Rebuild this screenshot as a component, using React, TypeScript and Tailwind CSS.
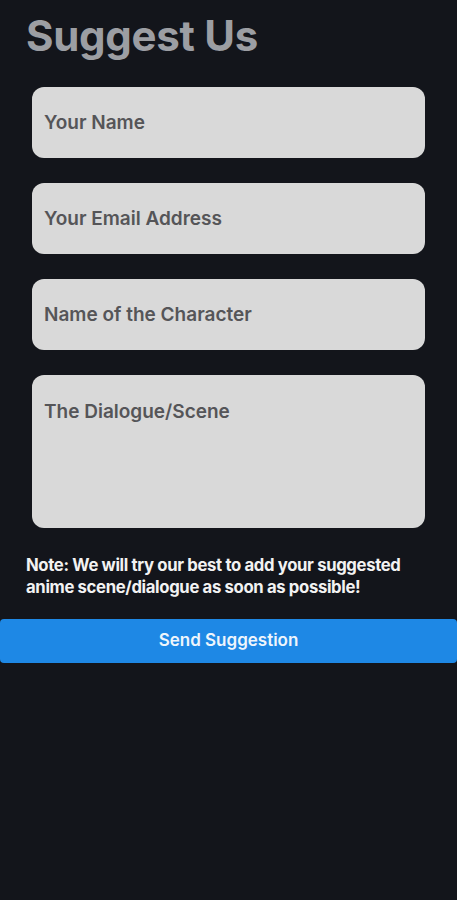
export default function App() {
  const fields = ['Your Name', 'Your Email Address', 'Name of the Character'];

  return (
    <div className="min-h-[900px] w-full bg-[#13151b] font-['Inter',sans-serif]">
      <h1 className="px-[26px] pt-[10px] text-[42px] font-bold leading-[52px] tracking-[-0.3px] text-[#9c9ea3]">
        Suggest Us
      </h1>
      <div className="mt-[25px] flex flex-col gap-[25px] px-[32px]">
        {fields.map((f) => (
          <div
            key={f}
            className="flex h-[71px] items-center rounded-[12px] bg-[#d9d9d9] px-[12px] pt-[2px] text-[19px] font-semibold text-[#555558]"
          >
            {f}
          </div>
        ))}
        <div className="h-[153px] rounded-[12px] bg-[#d9d9d9] px-[12px] pt-[25px] text-[19px] font-semibold leading-[24px] text-[#555558]">
          The Dialogue/Scene
        </div>
      </div>
      <p className="mt-[26px] px-[26px] text-[16.7px] font-bold leading-[22px] tracking-[-0.35px] text-[#f2f2f2]">
        Note: We will try our best to add your suggested anime scene/dialogue as soon as possible!
      </p>
      <button className="mt-[21px] flex h-[44px] w-full items-center justify-center rounded-[4px] bg-[#1e88e5] text-[17px] font-semibold text-[#eef5fc]">
        Send Suggestion
      </button>
    </div>
  );
}
